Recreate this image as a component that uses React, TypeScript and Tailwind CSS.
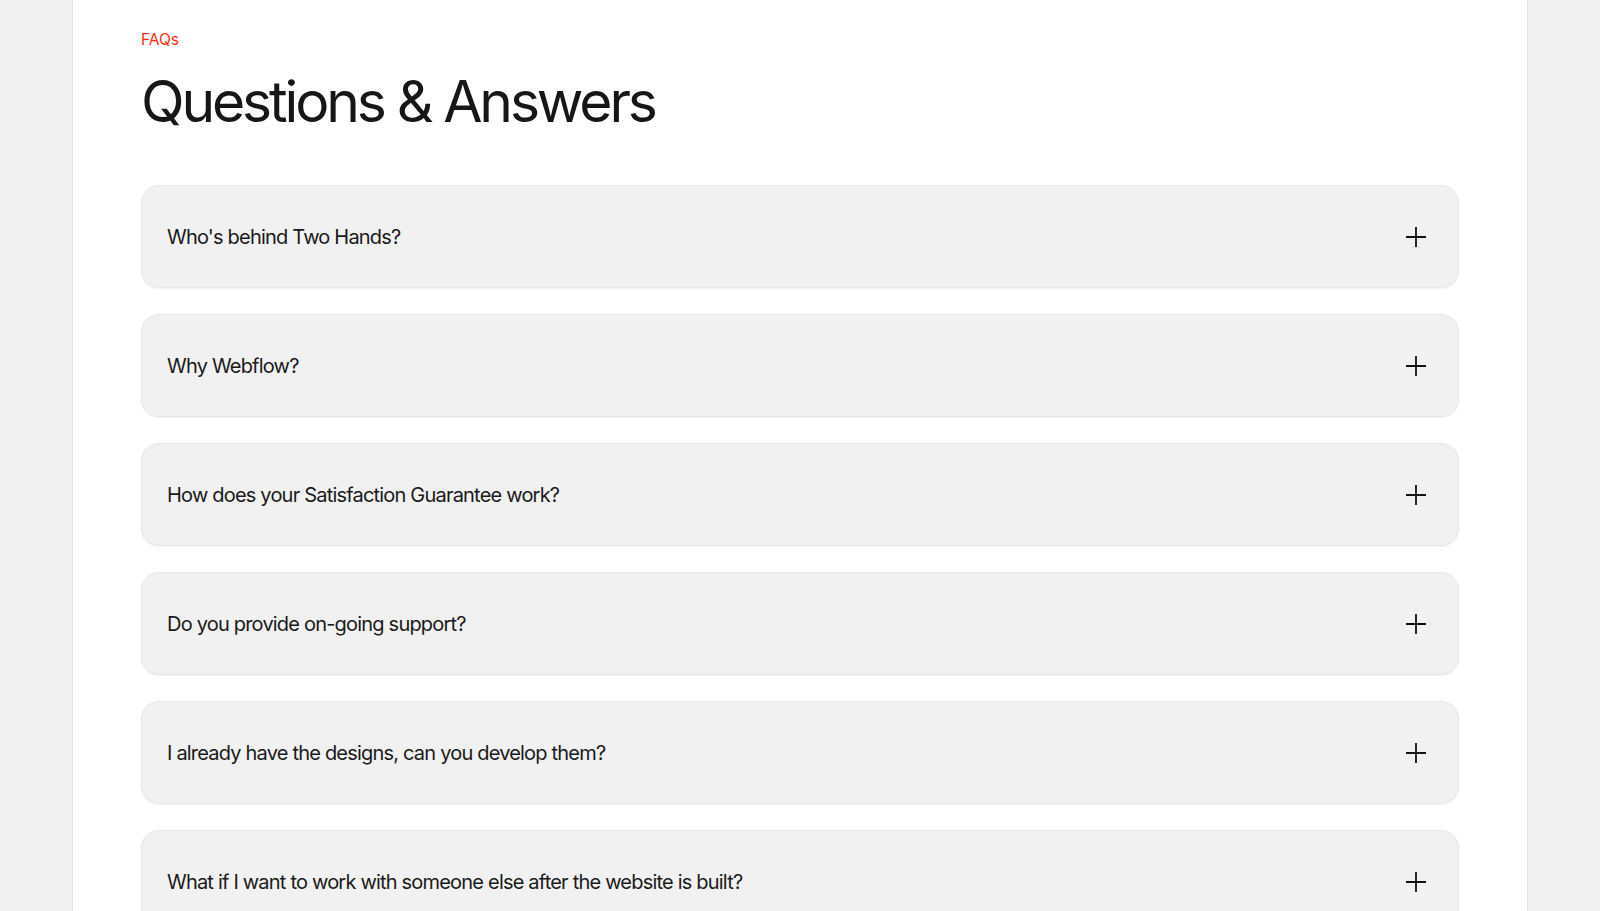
import React from "react";

const questions = [
  "Who's behind Two Hands?",
  "Why Webflow?",
  "How does your Satisfaction Guarantee work?",
  "Do you provide on-going support?",
  "I already have the designs, can you develop them?",
  "What if I want to work with someone else after the website is built?",
];

function Plus() {
  return (
    <svg width="20" height="20" viewBox="0 0 20 20" fill="none" className="shrink-0">
      <path d="M0 10H20M10 0V20" stroke="#111111" strokeWidth="1.8" />
    </svg>
  );
}

export default function App() {
  return (
    <div
      className="min-h-[911px] w-full bg-[#f0f0f0]"
      style={{ fontFamily: "Inter, 'Noto Sans', sans-serif" }}
    >
      <div className="mx-auto w-[1456px] min-h-[911px] bg-white border-x border-[#e6e6e6] px-[68px] pt-[30px] pb-10">
        <div className="text-[15.5px] leading-[20px] text-[#ff2d12]">FAQs</div>
        <h1 className="mt-[18px] text-[57px] leading-[68px] tracking-[-0.055em] font-normal text-[#161616]">
          Questions &amp; Answers
        </h1>
        <div className="mt-[49px] flex flex-col gap-[26px]">
          {questions.map((q) => (
            <div
              key={q}
              className="flex h-[103px] items-center justify-between rounded-[18px] border border-[#e7e7e7] bg-[#f1f1f1] pl-[25px] pr-[32px] shadow-[0_1px_2px_rgba(0,0,0,0.06)]"
            >
              <span className="text-[20px] leading-[28px] tracking-[-0.04em] text-[#1a1a1a]">{q}</span>
              <Plus />
            </div>
          ))}
        </div>
      </div>
    </div>
  );
}
